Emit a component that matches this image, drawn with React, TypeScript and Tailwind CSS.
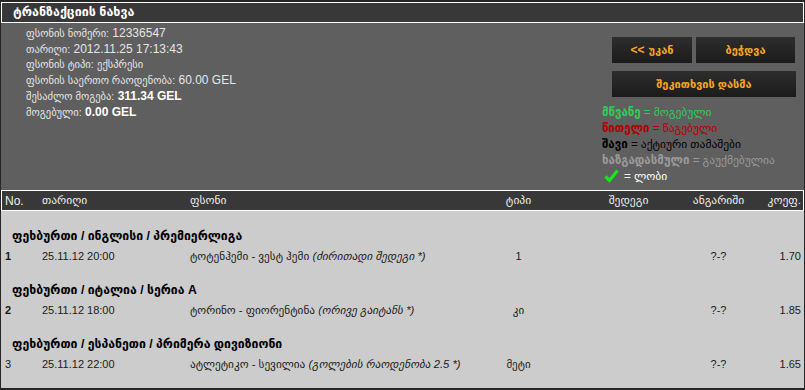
import React from 'react';

type Bet = {
    no: string;
    bold: boolean;
    league: string;
    date: string;
    match: string;
    note: string;
    type: string;
    result: string;
    account: string;
    coef: string;
};

const bets: Bet[] = [
    { no: '1', bold: true, league: 'ფეხბურთი / ინგლისი / პრემიერლიგა', date: '25.11.12 20:00', match: 'ტოტენჰემი - ვესტ ჰემი', note: '(ძირითადი შედეგი *)', type: '1', result: '', account: '?-?', coef: '1.70' },
    { no: '2', bold: true, league: 'ფეხბურთი / იტალია / სერია A', date: '25.11.12 18:00', match: 'ტორინო - ფიორენტინა', note: '(ორივე გაიტანს *)', type: 'კი', result: '', account: '?-?', coef: '1.85' },
    { no: '3', bold: false, league: 'ფეხბურთი / ესპანეთი / პრიმერა დივიზიონი', date: '25.11.12 22:00', match: 'ატლეტიკო - სევილია', note: '(გოლების რაოდენობა 2.5 *)', type: 'მეტი', result: '', account: '?-?', coef: '1.65' },
];

const info: { label: string; value: string; strong?: boolean; geo?: boolean }[] = [
    { label: 'ფსონის ნომერი:', value: '12336547' },
    { label: 'თარიღი:', value: '2012.11.25 17:13:43' },
    { label: 'ფსონის ტიპი:', value: 'ექსპრესი', geo: true },
    { label: 'ფსონის საერთო რაოდენობა:', value: '60.00 GEL' },
    { label: 'შესაძლო მოგება:', value: '311.34 GEL', strong: true },
    { label: 'მოგებული:', value: '0.00 GEL', strong: true },
];

const btn = 'h-[26px] flex items-center justify-center bg-gradient-to-b from-[#2e2e2e] to-[#1b1b1b] text-[#f7a722] font-bold text-[11px]';

const CheckIcon = () => (
    <svg width="15" height="14" viewBox="0 0 15 14">
        <path d="M1.5 7.5 L5.5 11.5 L13.5 1.5" fill="none" stroke="#19e619" strokeWidth="3.2" strokeLinejoin="round" />
    </svg>
);

export default function App() {
    return (
        <div className="w-[805px] h-[390px] bg-[#262626] pt-[2px] pl-[1px] font-['Liberation_Sans','DejaVu_Sans',sans-serif] overflow-hidden">
            <div className="w-[803px]">
                {/* title */}
                <div className="h-[21px] border border-white bg-[#383838] flex items-center pl-[11px] text-white font-bold text-[12.5px]">
                    ტრანზაქციის ნახვა
                </div>

                {/* details */}
                <div className="h-[167px] bg-[#5f5f5f] flex">
                    <div className="pl-[25px] pt-[3px] text-[12px] leading-[15.7px] text-[#e6e6e6]">
                        {info.map(row => (
                            <div key={row.label}>
                                <span className="text-[10.5px]">{row.label}</span>{' '}
                                <span className={row.strong ? 'font-bold text-white' : row.geo ? 'text-[10.5px]' : ''}>{row.value}</span>
                            </div>
                        ))}
                    </div>
                    <div className="ml-auto mr-[8px] w-[194px] pt-[14px]">
                        <div className="pl-[10px] flex gap-[4px]">
                            <button className={`${btn} w-[80px]`}><span className="text-[12px] mr-[4px]">&lt;&lt;</span>უკან</button>
                            <button className={`${btn} w-[99px]`}>ბეჭდვა</button>
                        </div>
                        <div className="pl-[10px] mt-[8px]">
                            <button className={`${btn} w-[184px]`}>შეკითხვის დასმა</button>
                        </div>
                        <div className="mt-[7px] text-[11.5px] leading-[16px]">
                            <div className="text-[#33cc55]"><b>მწვანე</b> = მოგებული</div>
                            <div className="text-[#b30000]"><b>წითელი</b> = წაგებული</div>
                            <div className="text-black"><b>შავი</b> = აქტიური თამაშები</div>
                            <div className="text-[#9a9a9a]"><b>ხაზგადასმული</b> = გაუქმებულია</div>
                            <div className="flex items-center gap-[5px] text-white pl-[2px]">
                                <CheckIcon />
                                <span>= ლობი</span>
                            </div>
                        </div>
                    </div>
                </div>

                {/* table header */}
                <div className="h-[21px] border border-white bg-[#383838] flex items-center text-[#eeeeee] text-[11.5px]">
                    <div className="w-[35px] pl-[3px] text-[12px]">No.</div>
                    <div className="w-[148px] pl-[5px]">თარიღი</div>
                    <div className="w-[276px] pl-[5px]">ფსონი</div>
                    <div className="w-[115px] text-center">ტიპი</div>
                    <div className="w-[105px] text-center">შედეგი</div>
                    <div className="w-[75px] text-center">ანგარიში</div>
                    <div className="flex-1 text-right pr-[2px]">კოეფ.</div>
                </div>

                {/* rows */}
                <div className="h-[177px] bg-[#cccccc] pt-[1px] text-[#1a1a1a] text-[11px]">
                    {bets.map(b => (
                        <div key={b.no} className="pt-[14px]">
                            <div className="h-[20px] flex items-center pl-[11px] font-bold text-[12.25px] text-black">
                                {b.league}
                            </div>
                            <div className="h-[20px] flex items-center">
                                <div className={`w-[36px] pl-[4px] ${b.bold ? 'font-bold' : ''}`}>{b.no}</div>
                                <div className="w-[148px] pl-[5px]">{b.date}</div>
                                <div className="w-[276px] pl-[5px] text-[11.25px] whitespace-nowrap">
                                    {b.match} <i>{b.note}</i>
                                </div>
                                <div className="w-[115px] text-center text-[11px]">{b.type}</div>
                                <div className="w-[105px] text-center">{b.result}</div>
                                <div className="w-[75px] text-center">{b.account}</div>
                                <div className="flex-1 text-right pr-[3px]">{b.coef}</div>
                            </div>
                        </div>
                    ))}
                </div>
            </div>
        </div>
    );
}
